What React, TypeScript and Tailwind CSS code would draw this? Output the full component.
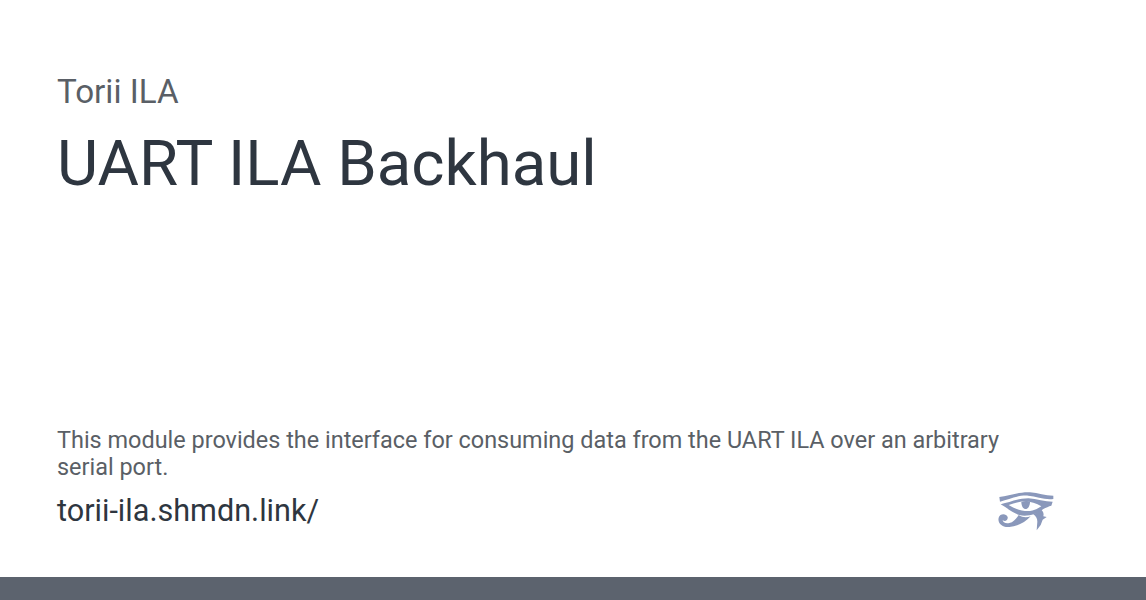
const EyeOfHorus = () => (
  <svg width="56" height="40" viewBox="54 44 168 120" fill="#8a98bb">
    {/* brow */}
    <path d="M58 62 C90 58 120 46 150 48 C175 50 195 58 220 58 L220 68 C195 72 170 60 145 58 C115 56 90 68 60 76 Z" />
    {/* eye outline */}
    <path d="M62 84 C90 78 115 66 145 66 C170 68 195 76 218 76 L214 88 C206 90 198 94 190 98 C170 114 140 122 118 116 C100 110 82 96 62 84 Z M86 86 C104 98 128 106 150 104 C164 102 174 97 184 90 C168 80 146 73 128 75 C114 77 100 82 86 86 Z" fillRule="evenodd" />
    {/* pupil */}
    <path d="M124 76 C132 73 144 73 150 76 C150 90 143 98 137 98 C130 98 124 90 124 76 Z" />
    {/* curl */}
    <path d="M116 116 C128 124 140 124 152 120 C136 138 112 150 88 152 C66 154 52 140 56 124 C59 112 78 110 83 122 C85 132 74 138 68 131 C68 138 76 142 88 140 C100 138 108 128 116 116 Z" />
    {/* tear */}
    <path d="M160 114 L184 100 C190 106 192 112 190 120 L200 122 L188 130 L182 146 L170 162 L172 136 C172 126 168 120 160 114 Z" />
  </svg>
);

export default function App() {
  return (
    <div className="flex h-[600px] w-[1146px] flex-col bg-white font-['Roboto',sans-serif]">
      <div className="flex flex-1 flex-col px-[57px] pt-[70px]">
        <div className="text-[33.2px] leading-[44px] text-[#5a5f66]">Torii ILA</div>
        <h1 className="mt-[12px] text-[63.5px] leading-[76px] text-[#2e3640]">UART ILA Backhaul</h1>
        <div className="mt-auto w-[960px] text-[23.45px] leading-[27px] text-[#5a5f66]">
          This module provides the interface for consuming data from the UART ILA over an arbitrary serial port.
        </div>
        <div className="mb-[44px] mt-[8px] flex items-center justify-between pr-[35px]">
          <div className="text-[30.6px] leading-[44px] text-[#2e3640]">torii-ila.shmdn.link/</div>
          <EyeOfHorus />
        </div>
      </div>
      <div className="h-[23px] bg-[#5c636e]" />
    </div>
  );
}
